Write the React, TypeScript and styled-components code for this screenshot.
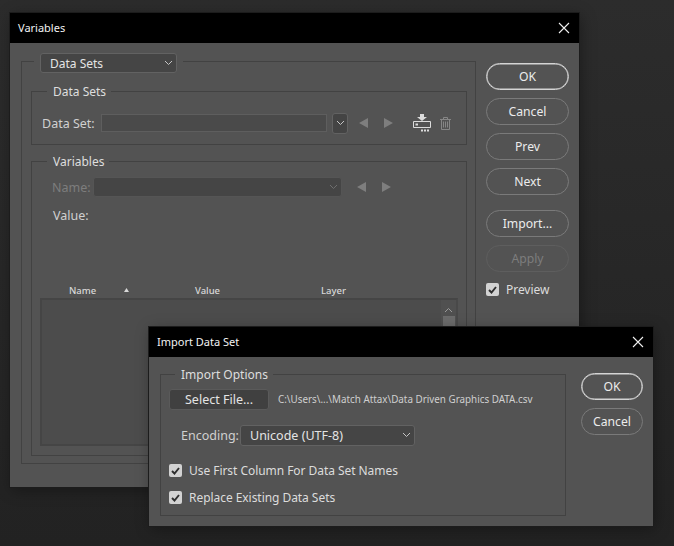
import * as React from 'react'
import styled, { createGlobalStyle } from 'styled-components'

const Global = createGlobalStyle`
  html, body { margin: 0; padding: 0; height: 100%; }
  body { background: #262626; font-family: "Noto Sans", "Open Sans", sans-serif; font-size: 12px; color: #d8d8d8; }
  * { box-sizing: border-box; }
`

const Desktop = styled.div`
  position: relative;
  width: 674px;
  height: 546px;
  overflow: hidden;
  background: linear-gradient(180deg, #2c2c2c 0%, #282828 40%, #222 100%);
`

const Window = styled.section<{ $left: number; $top: number; $width: number; $height: number }>`
  position: absolute;
  left: ${p => p.$left}px;
  top: ${p => p.$top}px;
  width: ${p => p.$width}px;
  height: ${p => p.$height}px;
  display: flex;
  flex-direction: column;
  background: #535353;
  box-shadow: 0 0 0 1px #1c1c1c, 2px 3px 14px rgba(0, 0, 0, 0.35);
`

const TitleBar = styled.header`
  flex: none;
  height: 30px;
  display: flex;
  align-items: center;
  justify-content: space-between;
  padding: 0 9px 1px 8px;
  background: #000;
  color: #f2f2f2;
  font-size: 11px;
`

const Body = styled.div<{ $top: number; $left: number }>`
  flex: 1;
  display: flex;
  align-items: flex-start;
  padding: ${p => p.$top}px 0 0 ${p => p.$left}px;
`

const Group = styled.fieldset<{ $width: number; $height: number }>`
  flex: none;
  width: ${p => p.$width}px;
  height: ${p => p.$height}px;
  min-width: 0;
  margin: 0;
  padding: 0 8px;
  border: 1px solid #424242;
`

const HeadLegend = styled.legend`
  margin-left: 4px;
  padding: 0 6px;
  height: 17px;
`

const TextLegend = styled.legend<{ $indent: number }>`
  margin-left: ${p => p.$indent}px;
  padding: 0 5px 0 6px;
  height: 16px;
  line-height: 18px;
  font-size: 12px;
  color: #dedede;
`

const SubStack = styled.div`
  display: flex;
  flex-direction: column;
  gap: 8px;
  padding: 13px 0 0 1px;
`

const Row = styled.div<{ $top: number; $indent: number }>`
  display: flex;
  align-items: center;
  height: 20px;
  margin-top: ${p => p.$top}px;
  padding-left: ${p => p.$indent}px;
`

const Label = styled.span<{ $width: number; $off?: boolean }>`
  flex: none;
  width: ${p => p.$width}px;
  color: ${p => (p.$off ? '#7d7d7d' : '#d0d0d0')};
  font-size: 12.5px;
`

const Input = styled.div`
  flex: none;
  width: 226px;
  height: 18px;
  background: #4a4a4a;
  border: 1px solid #5e5e5e;
`

const Select = styled.div<{ $width: number; $height: number; $off?: boolean }>`
  flex: none;
  width: ${p => p.$width}px;
  height: ${p => p.$height}px;
  display: flex;
  align-items: center;
  justify-content: space-between;
  padding: 0 3px 0 9px;
  background: #454545;
  border: 1px solid ${p => (p.$off ? '#555' : '#626262')};
  border-radius: 3px;
  color: #e4e4e4;
  font-size: 12.5px;
`

const HeadSelect = styled(Select)`
  font-size: 12px;
`

const ComboButton = styled.div`
  flex: none;
  width: 16px;
  height: 21px;
  margin-left: 5px;
  display: flex;
  align-items: center;
  justify-content: center;
  background: #444;
  border: 1px solid #626262;
  border-radius: 3px;
`

const Nudge = styled.svg<{ $left: number }>`
  flex: none;
  margin-left: ${p => p.$left}px;
`

const ValueLabel = styled.div`
  height: 16px;
  line-height: 16px;
  margin-top: 11px;
  padding-left: 13px;
  color: #d0d0d0;
  font-size: 12.5px;
`

const TableHead = styled.div`
  display: grid;
  grid-template-columns: 55px 71px 126px 1fr;
  align-items: center;
  height: 14px;
  margin-top: 59px;
  padding-left: 29px;
  color: #d8d8d8;
  font-size: 9.5px;
  font-weight: 500;
`

const SortMark = styled.svg`
  display: block;
`

const Table = styled.div`
  display: flex;
  justify-content: flex-end;
  height: 148px;
  margin: 1px 0 0 0;
  background: #4c4c4c;
  border: 2px solid #454545;
  border-right-color: #494949;
`

const ScrollBar = styled.div`
  width: 15px;
  display: flex;
  flex-direction: column;
  align-items: center;
  padding-top: 7px;
  background: #505050;
`

const ScrollThumb = styled.div`
  width: 12px;
  height: 24px;
  margin-top: 3px;
  background: #6c6c6c;
`

const Side = styled.div<{ $width: number; $top: number; $left: number }>`
  flex: none;
  width: ${p => p.$width}px;
  margin: ${p => p.$top}px 0 0 ${p => p.$left}px;
  display: flex;
  flex-direction: column;
  gap: 8px;
`

const Pill = styled.button<{ $primary?: boolean; $off?: boolean; $gap?: number }>`
  width: 100%;
  height: 27px;
  margin: ${p => p.$gap || 0}px 0 0 0;
  padding: 0;
  background: transparent;
  border: 1px solid ${p => (p.$primary ? '#d4d4d4' : p.$off ? '#5e5e5e' : '#7a7a7a')};
  border-radius: 14px;
  box-shadow: ${p => (p.$primary ? 'inset 0 0 0 0.5px #d4d4d4' : 'none')};
  color: ${p => (p.$off ? '#7d7d7d' : '#ececec')};
  font: inherit;
  font-size: 12.2px;
`

const FlatButton = styled.button`
  flex: none;
  width: 100px;
  height: 21px;
  padding: 0;
  background: #404040;
  border: 1px solid #5a5a5a;
  border-radius: 3px;
  color: #e4e4e4;
  font: inherit;
  font-size: 12.5px;
`

const FilePath = styled.span`
  margin-left: 9px;
  color: #cfcfcf;
  font-size: 9.85px;
`

const CheckRow = styled.label<{ $top: number; $indent?: number }>`
  display: flex;
  align-items: center;
  gap: 7px;
  height: 13px;
  margin-top: ${p => p.$top}px;
  padding-left: ${p => p.$indent || 0}px;
  color: #dcdcdc;
  font-size: 12px;
  letter-spacing: -0.05px;
`

const Box = styled.span`
  flex: none;
  width: 13px;
  height: 13px;
  display: flex;
  align-items: center;
  justify-content: center;
  background: #d2d2d2;
  border-radius: 2px;
`

const Chevron = ({ color = '#c4c4c4', up = false }: { color?: string; up?: boolean }) => (
  <svg width="9" height="6" viewBox="0 0 9 6" fill="none">
    <path d={up ? 'M1 5l3.500-3.500L8 5' : 'M1 1l3.500 3.500L8 1'} stroke={color} strokeWidth="1" />
  </svg>
)

const Close = () => (
  <svg width="12" height="12" viewBox="0 0 12 12" fill="none">
    <path d="M1 1l10 10M11 1L1 11" stroke="#f0f0f0" strokeWidth="1.1" />
  </svg>
)

const Prev = ({ left }: { left: number }) => (
  <Nudge $left={left} width="9" height="10" viewBox="0 0 9 10">
    <path d="M9 0v10L0 5z" fill="#7e7e7e" />
  </Nudge>
)

const Next = ({ left }: { left: number }) => (
  <Nudge $left={left} width="9" height="10" viewBox="0 0 9 10">
    <path d="M0 0v10l9-5z" fill="#7e7e7e" />
  </Nudge>
)

const ImportIcon = () => (
  <Nudge $left={20} width="18" height="18" viewBox="0 0 18 18" fill="none">
    <path d="M7 0h4v3h3l-5 4-5-4h3z" fill="#dcdcdc" />
    <path d="M4 7.500H.5v6h17v-6H14" stroke="#dcdcdc" />
    <path d="M4 7.500h10" stroke="#dcdcdc" />
    <path d="M2.500 9.500h2.500v2H2.500zM8 15.500h2v2H8zM11 15.500h2v2h-2zM14 15.500h2v2h-2z" fill="#dcdcdc" />
  </Nudge>
)

const TrashIcon = () => (
  <Nudge $left={9} width="11" height="13" viewBox="0 0 11 13" fill="none" stroke="#868686">
    <path d="M0 2.500h11M3.500 2.500V.5h4v2M1.500 2.500v10h8v-10M3.500 4.500v6M5.500 4.500v6M7.500 4.500v6" />
  </Nudge>
)

const Check = () => (
  <svg width="9" height="8" viewBox="0 0 9 8" fill="none">
    <path d="M1 4l2.500 2.500L8 1" stroke="#2e2e2e" strokeWidth="1.900" />
  </svg>
)

export default function App() {
  return (
    <Desktop>
      <Global />

      <Window $left={10} $top={13} $width={569} $height={474}>
        <TitleBar>
          Variables
          <Close />
        </TitleBar>
        <Body $top={10} $left={11}>
          <Group $width={455} $height={411}>
            <HeadLegend>
              <HeadSelect $width={137} $height={20}>
                Data Sets
                <Chevron />
              </HeadSelect>
            </HeadLegend>
            <SubStack>
              <Group $width={436} $height={62}>
                <TextLegend $indent={7}>Data Sets</TextLegend>
                <Row $top={14} $indent={2}>
                  <Label $width={59}>Data Set:</Label>
                  <Input />
                  <ComboButton>
                    <Chevron />
                  </ComboButton>
                  <Prev left={11} />
                  <Next left={16} />
                  <ImportIcon />
                  <TrashIcon />
                </Row>
              </Group>
              <Group $width={436} $height={303}>
                <TextLegend $indent={7}>Variables</TextLegend>
                <Row $top={8} $indent={12}>
                  <Label $width={41} $off>Name:</Label>
                  <Select $width={249} $height={20} $off>
                    <span />
                    <Chevron color="#6e6e6e" />
                  </Select>
                  <Prev left={15} />
                  <Next left={16} />
                </Row>
                <ValueLabel>Value:</ValueLabel>
                <TableHead>
                  <span>Name</span>
                  <SortMark width="5" height="4" viewBox="0 0 5 4">
                    <path d="M0 4l2.500-4L5 4z" fill="#d8d8d8" />
                  </SortMark>
                  <span>Value</span>
                  <span>Layer</span>
                </TableHead>
                <Table>
                  <ScrollBar>
                    <Chevron color="#9a9a9a" up />
                    <ScrollThumb />
                  </ScrollBar>
                </Table>
              </Group>
            </SubStack>
          </Group>
          <Side $width={83} $top={10} $left={10}>
            <Pill $primary>OK</Pill>
            <Pill>Cancel</Pill>
            <Pill>Prev</Pill>
            <Pill>Next</Pill>
            <Pill $gap={7}>Import...</Pill>
            <Pill $off>Apply</Pill>
            <CheckRow $top={3}>
              <Box>
                <Check />
              </Box>
              Preview
            </CheckRow>
          </Side>
        </Body>
      </Window>

      <Window $left={149} $top={327} $width={504} $height={199}>
        <TitleBar>
          Import Data Set
          <Close />
        </TitleBar>
        <Body $top={9} $left={11}>
          <Group $width={406} $height={150}>
            <TextLegend $indent={6}>Import Options</TextLegend>
            <Row $top={7} $indent={0}>
              <FlatButton>Select File...</FlatButton>
              <FilePath>C:\Users\...\Match Attax\Data Driven Graphics DATA.csv</FilePath>
            </Row>
            <Row $top={16} $indent={12}>
              <Label $width={59}>Encoding:</Label>
              <Select $width={175} $height={21}>
                Unicode (UTF-8)
                <Chevron />
              </Select>
            </Row>
            <CheckRow $top={19}>
              <Box>
                <Check />
              </Box>
              Use First Column For Data Set Names
            </CheckRow>
            <CheckRow $top={14}>
              <Box>
                <Check />
              </Box>
              Replace Existing Data Sets
            </CheckRow>
          </Group>
          <Side $width={62} $top={7} $left={15}>
            <Pill $primary>OK</Pill>
            <Pill>Cancel</Pill>
          </Side>
        </Body>
      </Window>
    </Desktop>
  )
}
